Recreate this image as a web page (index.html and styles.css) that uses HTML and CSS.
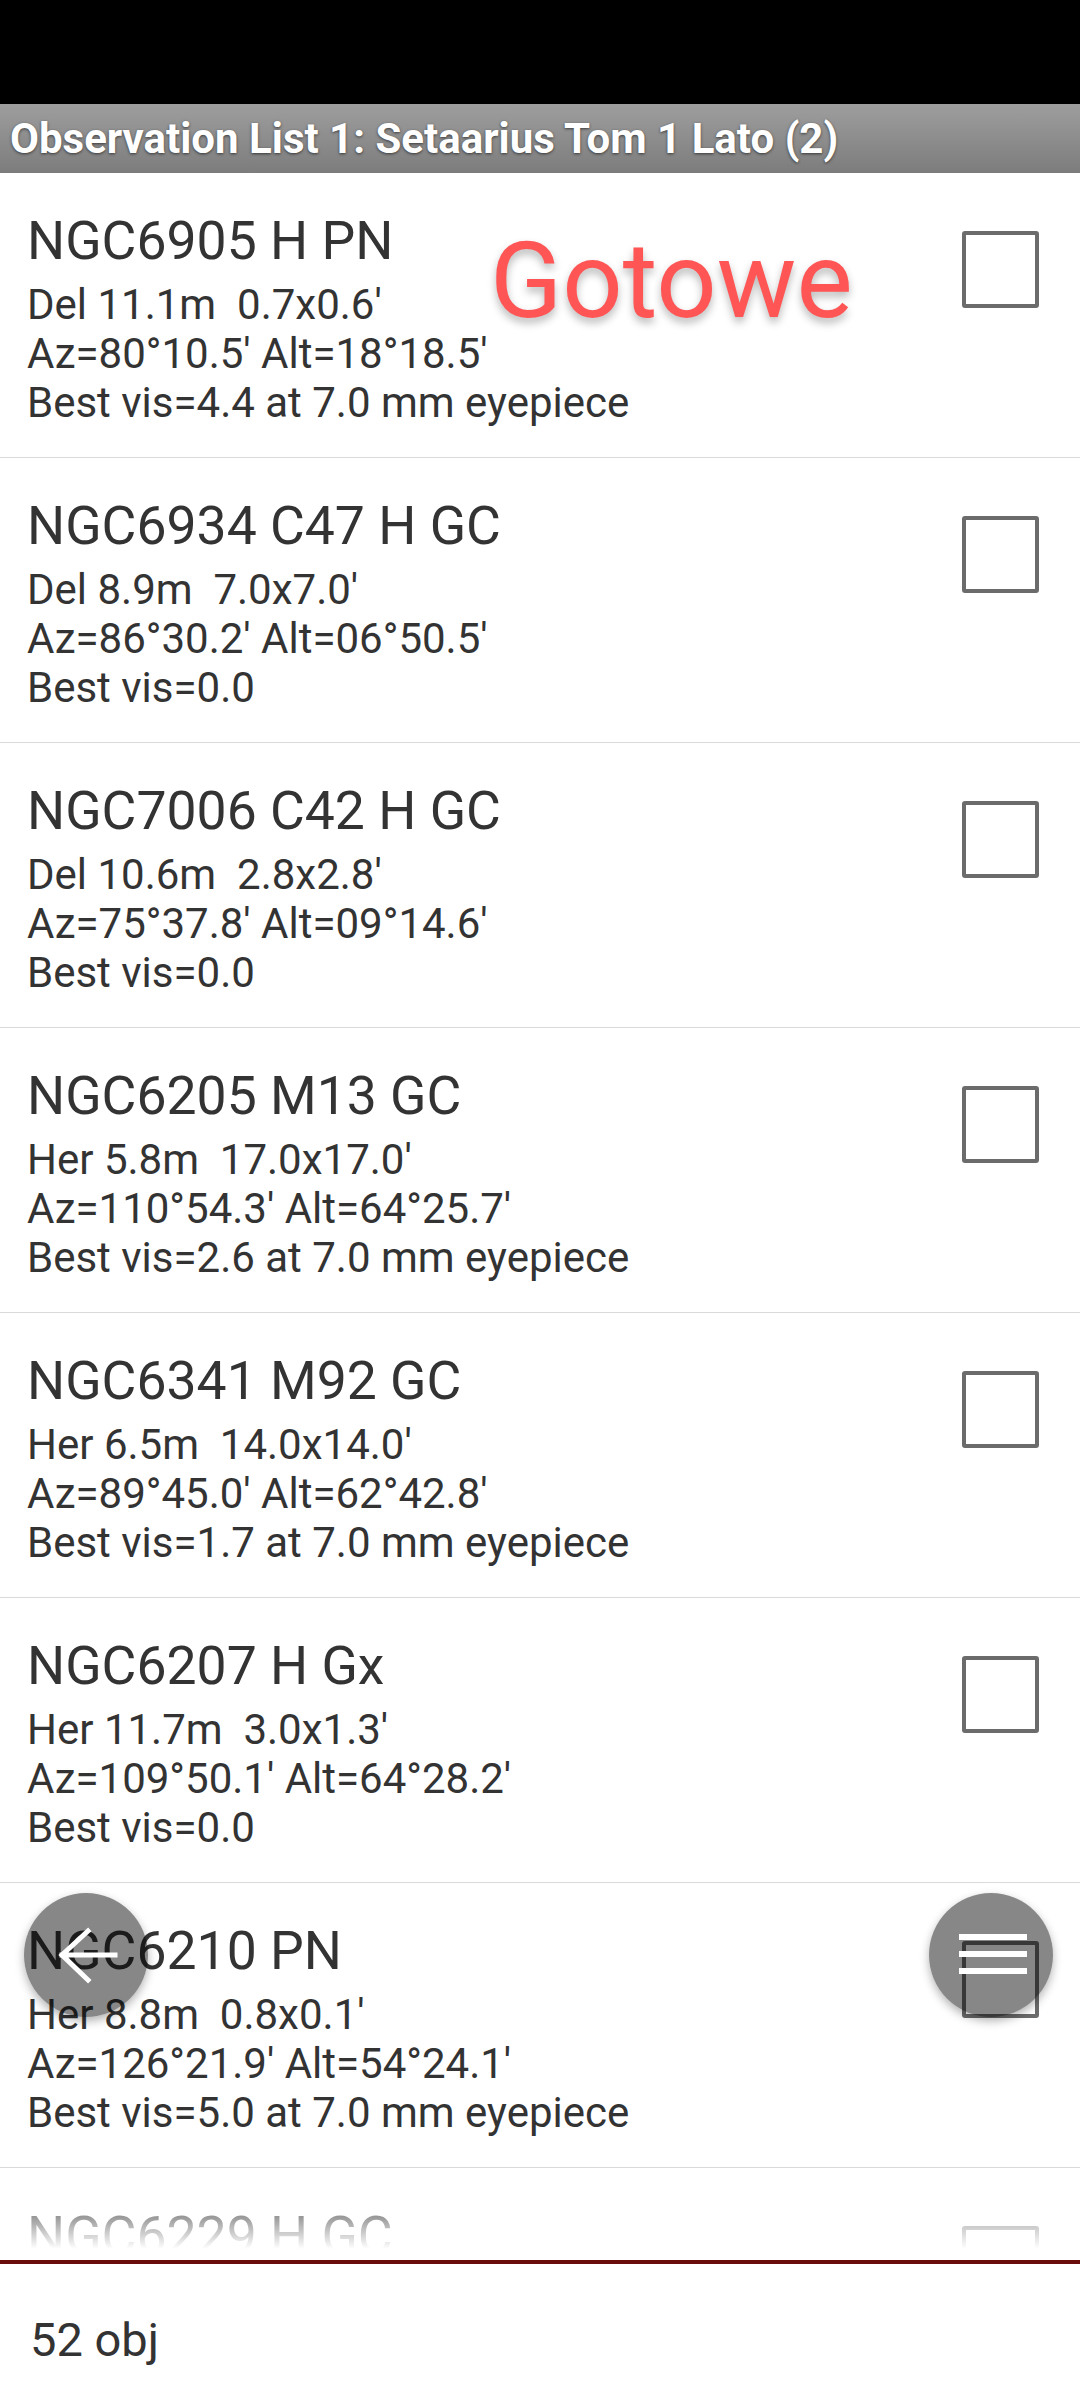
FILE: index.html
```html
<!DOCTYPE html>
<html lang="en">
<head>
    <meta charset="UTF-8">
    <meta name="viewport" content="width=device-width, initial-scale=1.0">
    <title>Observation List</title>
    <link rel="stylesheet" href="styles.css">
</head>
<body>
    <div class="screen">
        <div class="status-bar"></div>
        <div class="title-bar">Observation List 1: Setaarius Tom 1 Lato (2)</div>

        <div class="list">
            <div class="row">
                <div class="info">
                    <div class="name">NGC6905 H PN</div>
                    <div class="line">Del 11.1m  0.7x0.6'</div>
                    <div class="line">Az=80°10.5' Alt=18°18.5'</div>
                    <div class="line">Best vis=4.4 at 7.0 mm eyepiece</div>
                </div>
                <span class="check"></span>
            </div>
            <div class="row">
                <div class="info">
                    <div class="name">NGC6934 C47 H GC</div>
                    <div class="line">Del 8.9m  7.0x7.0'</div>
                    <div class="line">Az=86°30.2' Alt=06°50.5'</div>
                    <div class="line">Best vis=0.0</div>
                </div>
                <span class="check"></span>
            </div>
            <div class="row">
                <div class="info">
                    <div class="name">NGC7006 C42 H GC</div>
                    <div class="line">Del 10.6m  2.8x2.8'</div>
                    <div class="line">Az=75°37.8' Alt=09°14.6'</div>
                    <div class="line">Best vis=0.0</div>
                </div>
                <span class="check"></span>
            </div>
            <div class="row">
                <div class="info">
                    <div class="name">NGC6205 M13 GC</div>
                    <div class="line">Her 5.8m  17.0x17.0'</div>
                    <div class="line">Az=110°54.3' Alt=64°25.7'</div>
                    <div class="line">Best vis=2.6 at 7.0 mm eyepiece</div>
                </div>
                <span class="check"></span>
            </div>
            <div class="row">
                <div class="info">
                    <div class="name">NGC6341 M92 GC</div>
                    <div class="line">Her 6.5m  14.0x14.0'</div>
                    <div class="line">Az=89°45.0' Alt=62°42.8'</div>
                    <div class="line">Best vis=1.7 at 7.0 mm eyepiece</div>
                </div>
                <span class="check"></span>
            </div>
            <div class="row">
                <div class="info">
                    <div class="name">NGC6207 H Gx</div>
                    <div class="line">Her 11.7m  3.0x1.3'</div>
                    <div class="line">Az=109°50.1' Alt=64°28.2'</div>
                    <div class="line">Best vis=0.0</div>
                </div>
                <span class="check"></span>
            </div>
            <div class="row">
                <div class="info">
                    <div class="name">NGC6210 PN</div>
                    <div class="line">Her 8.8m  0.8x0.1'</div>
                    <div class="line">Az=126°21.9' Alt=54°24.1'</div>
                    <div class="line">Best vis=5.0 at 7.0 mm eyepiece</div>
                </div>
                <span class="check"></span>
            </div>
            <div class="row">
                <div class="info">
                    <div class="name">NGC6229 H GC</div>
                    <div class="line">Her 9.4m  4.5x4.5'</div>
                    <div class="line">Az=98°12.4' Alt=58°40.3'</div>
                    <div class="line">Best vis=0.0</div>
                </div>
                <span class="check"></span>
            </div>
            <div class="fade"></div>
        </div>

        <div class="footer">52 obj</div>

        <!-- overlays -->
        <div class="toast">Gotowe</div>
        <button class="fab fab-back">
            <svg width="124" height="124" viewBox="0 0 124 124">
                <path d="M64 38 L38 62 L64 87 M38 62 L91 62" fill="none" stroke="#fff" stroke-width="5" stroke-linecap="square"/>
            </svg>
        </button>
        <button class="fab fab-menu">
            <svg width="124" height="124" viewBox="0 0 124 124">
                <rect x="30" y="41" width="68" height="6" fill="#fff"/>
                <rect x="30" y="58" width="68" height="6" fill="#fff"/>
                <rect x="30" y="75" width="68" height="6" fill="#fff"/>
            </svg>
        </button>
    </div>
</body>
</html>
```

FILE: styles.css
```css
body {
    margin: 0;
    font-family: Roboto, "Noto Sans", sans-serif;
    background-color: #fff;
}
.screen {
    position: relative;
    width: 1080px;
    height: 2400px;
    overflow: hidden;
    display: flex;
    flex-direction: column;
}
.status-bar {
    height: 104px;
    background-color: #000;
}
.title-bar {
    height: 69px;
    line-height: 69px;
    padding-left: 10px;
    font-size: 42px;
    font-weight: bold;
    color: #fff;
    white-space: nowrap;
    background: linear-gradient(#9e9e9e, #7c7c7c);
    text-shadow: 0 1px 3px rgba(0,0,0,0.6);
}
.list {
    position: relative;
    height: 2087px;
    overflow: hidden;
}
.row {
    display: flex;
    justify-content: space-between;
    align-items: flex-start;
    height: 247px;
    padding: 37px 41px 0 27px;
    border-bottom: 1px solid #dadada;
    color: #333;
}
.name {
    font-size: 53.5px;
    line-height: 61px;
    margin-bottom: 9px;
}
.line {
    font-size: 42px;
    line-height: 49px;
    white-space: pre;
}
.check {
    width: 77px;
    height: 77px;
    margin-top: 21px;
    box-sizing: border-box;
    border: 4px solid #6b6b6b;
    border-radius: 3px;
}
.fade {
    position: absolute;
    left: 0;
    right: 0;
    bottom: 0;
    height: 75px;
    background: linear-gradient(rgba(255,255,255,0), #fff 85%);
}
.footer {
    border-top: 4px solid #6b0c0c;
    height: 120px;
    padding: 16px 0 0 30px;
    font-size: 47px;
    line-height: 120px;
    color: #333;
}
.toast {
    position: absolute;
    left: 490px;
    top: 228px;
    font-size: 106px;
    line-height: 106px;
    color: #ff5555;
    text-shadow: 0 5px 8px rgba(0,0,0,0.28);
}
.fab {
    position: absolute;
    top: 1893px;
    width: 124px;
    height: 124px;
    padding: 0;
    border: none;
    border-radius: 50%;
    background-color: rgba(0,0,0,0.47);
    box-shadow: 0 4px 10px rgba(0,0,0,0.3);
}
.fab svg {
    display: block;
}
.fab-back {
    left: 24px;
}
.fab-menu {
    left: 929px;
}
```
